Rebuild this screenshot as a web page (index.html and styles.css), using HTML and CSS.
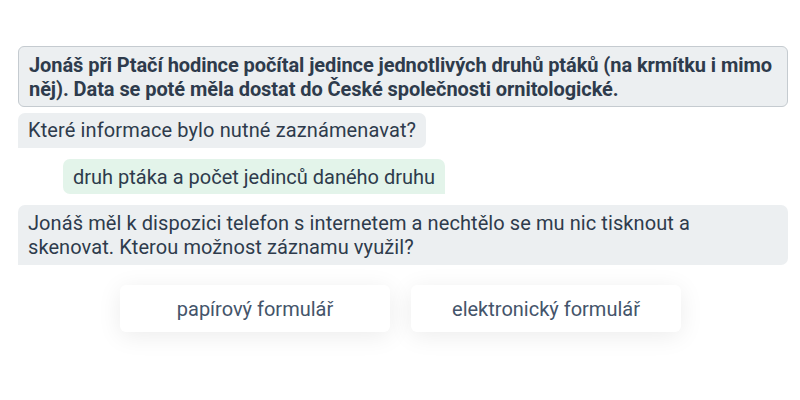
FILE: index.html
```html
<!DOCTYPE html>
<html lang="cs">
<head>
<meta charset="utf-8">
<link rel="stylesheet" href="styles.css">
</head>
<body>
<div class="chat">
  <div class="intro">Jonáš při Ptačí hodince počítal jedince jednotlivých druhů ptáků (na krmítku i mimo něj). Data se poté měla dostat do České společnosti ornitologické.</div>
  <div class="row first"><div class="bubble q short">Které informace bylo nutné zaznámenavat?</div></div>
  <div class="row answer-row"><div class="bubble a">druh ptáka a počet jedinců daného druhu</div></div>
  <div class="bubble q wide">Jonáš měl k dispozici telefon s internetem a nechtělo se mu nic tisknout a skenovat. Kterou možnost záznamu využil?</div>
  <div class="choices">
    <button class="choice">papírový formulář</button>
    <button class="choice">elektronický formulář</button>
  </div>
</div>
</body>
</html>
```
FILE: styles.css
```css
html, body {
  margin: 0;
  padding: 0;
  background: #ffffff;
}
body {
  font-family: Roboto, "Liberation Sans", sans-serif;
  font-size: 20px;
  line-height: 24px;
  color: #2e3b4c;
  min-height: 400px;
}
.chat {
  margin: 46px 0 0 18px;
  padding-bottom: 50px;
  width: 770px;
  display: flex;
  flex-direction: column;
}
.intro {
  background: #eceff1;
  border: 1px solid #c5cbd0;
  border-radius: 6px;
  padding: 6px 8px 5px 10px;
  font-weight: 700;
  letter-spacing: -0.07px;
}
.row {
  display: flex;
}
.bubble {
  padding: 5px 10px 6px 10px;
}
.q {
  background: #eceff1;
  border-radius: 7px 7px 7px 0;
}
.short {
  letter-spacing: 0.12px;
}
.first {
  margin-top: 6px;
}
.answer-row {
  margin-top: 11px;
  padding-left: 45px;
}
.a {
  background: #e3f4ea;
  border-radius: 7px 7px 0 7px;
  padding-top: 6px;
  padding-bottom: 5px;
}
.wide {
  margin-top: 11px;
  padding: 6px 24px 6px 10px;
  letter-spacing: 0.08px;
}
.choices {
  margin-top: 20px;
  display: flex;
  justify-content: center;
  gap: 21px;
  padding-right: 5px;
}
.choice {
  width: 270px;
  height: 47px;
  border: none;
  background: #ffffff;
  border-radius: 6px;
  box-shadow: 0 4px 24px rgba(0, 0, 0, 0.08);
  font-family: Roboto, "Liberation Sans", sans-serif;
  font-size: 20px;
  color: #44546a;
  cursor: pointer;
}
```
